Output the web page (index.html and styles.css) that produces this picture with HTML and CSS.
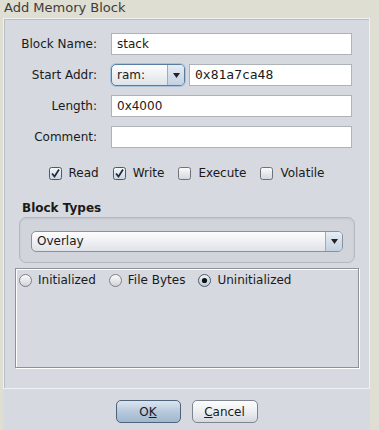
FILE: index.html
```html
<!DOCTYPE html>
<html lang="en">
<head>
    <meta charset="UTF-8">
    <title>Add Memory Block</title>
    <link rel="stylesheet" href="styles.css">
</head>
<body>
    <div class="title">Add Memory Block</div>

    <div class="window">
        <div class="main">
            <div class="form-grid">
                <label class="field-label">Block Name:</label>
                <div class="text-field">stack</div>

                <label class="field-label">Start Addr:</label>
                <div class="addr-row">
                    <div class="combo combo-focus space-combo">
                        <span class="combo-text">ram:</span>
                        <span class="combo-arrow">
                            <svg width="7" height="5" viewBox="0 0 7 5"><path d="M0 0 H7 L3.5 5 Z" fill="#222"/></svg>
                        </span>
                    </div>
                    <div class="text-field mono addr-field">0x81a7ca48</div>
                </div>

                <label class="field-label">Length:</label>
                <div class="text-field">0x4000</div>

                <label class="field-label">Comment:</label>
                <div class="text-field"></div>
            </div>

            <div class="check-row">
                <span class="check-item">
                    <svg class="check-box" width="13" height="13" viewBox="0 0 13 13">
                        <rect x="0.5" y="0.5" width="12" height="12" rx="2" fill="url(#cbOn)" stroke="#535861"/>
                        <path d="M3 6.5 L5.5 9.5 L10 2.5" fill="none" stroke="#1e2b3c" stroke-width="1.7"/>
                    </svg>
                    Read
                </span>
                <span class="check-item">
                    <svg class="check-box" width="13" height="13" viewBox="0 0 13 13">
                        <rect x="0.5" y="0.5" width="12" height="12" rx="2" fill="url(#cbOn)" stroke="#535861"/>
                        <path d="M3 6.5 L5.5 9.5 L10 2.5" fill="none" stroke="#1e2b3c" stroke-width="1.7"/>
                    </svg>
                    Write
                </span>
                <span class="check-item">
                    <svg class="check-box" width="13" height="13" viewBox="0 0 13 13">
                        <rect x="0.5" y="0.5" width="12" height="12" rx="2" fill="url(#cbOff)" stroke="#6d7179"/>
                    </svg>
                    Execute
                </span>
                <span class="check-item">
                    <svg class="check-box" width="13" height="13" viewBox="0 0 13 13">
                        <rect x="0.5" y="0.5" width="12" height="12" rx="2" fill="url(#cbOff)" stroke="#6d7179"/>
                    </svg>
                    Volatile
                </span>
            </div>

            <div class="section-title">Block Types</div>
            <div class="type-group">
                <div class="combo type-combo">
                    <span class="combo-text">Overlay</span>
                    <span class="combo-arrow">
                        <svg width="7" height="5" viewBox="0 0 7 5"><path d="M0 0 H7 L3.5 5 Z" fill="#222"/></svg>
                    </span>
                </div>
            </div>

            <div class="radio-panel">
                <span class="radio-item">
                    <svg width="13" height="13" viewBox="0 0 13 13">
                        <circle cx="6.5" cy="6.5" r="6" fill="url(#rbOff)" stroke="#7a7e86"/>
                    </svg>
                    Initialized
                </span>
                <span class="radio-item">
                    <svg width="13" height="13" viewBox="0 0 13 13">
                        <circle cx="6.5" cy="6.5" r="6" fill="url(#rbOff)" stroke="#7a7e86"/>
                    </svg>
                    File Bytes
                </span>
                <span class="radio-item">
                    <svg width="13" height="13" viewBox="0 0 13 13">
                        <circle cx="6.5" cy="6.5" r="6" fill="url(#rbOn)" stroke="#4f5663"/>
                        <circle cx="6.5" cy="6.5" r="2.6" fill="#111"/>
                    </svg>
                    Uninitialized
                </span>
            </div>
        </div>

        <div class="button-row">
            <button class="btn btn-default">O<u>K</u></button>
            <button class="btn"><u>C</u>ancel</button>
        </div>
    </div>

    <!-- shared gradients for the check and radio glyphs -->
    <svg class="defs" width="0" height="0">
        <defs>
            <linearGradient id="cbOff" x1="0" y1="0" x2="0" y2="1">
                <stop offset="0" stop-color="#fbfbfc"/>
                <stop offset="1" stop-color="#d3d6dc"/>
            </linearGradient>
            <linearGradient id="cbOn" x1="0" y1="0" x2="0" y2="1">
                <stop offset="0" stop-color="#f4f7fb"/>
                <stop offset="1" stop-color="#c9d4e2"/>
            </linearGradient>
            <linearGradient id="rbOff" x1="0" y1="0" x2="0" y2="1">
                <stop offset="0" stop-color="#fcfcfd"/>
                <stop offset="1" stop-color="#cfd2d8"/>
            </linearGradient>
            <linearGradient id="rbOn" x1="0" y1="0" x2="0" y2="1">
                <stop offset="0" stop-color="#eef3f9"/>
                <stop offset="1" stop-color="#b9c8da"/>
            </linearGradient>
        </defs>
    </svg>
</body>
</html>
```

FILE: styles.css
```css
/* Swing / Nimbus style dialog */
body {
    margin: 0;
    background-color: #dfded3;
    font-family: "DejaVu Sans", sans-serif;
    font-size: 12px;
    color: #1a1a1a;
    overflow: hidden;
}

.title {
    height: 18px;
    padding-left: 4px;
    font-size: 13px;
    line-height: 16px;
    color: #3c3c3c;
}

.window {
    margin-left: 3px;
    width: 367px;
    height: 412px;
    background-color: #d6d9df;
}

.main {
    height: 369px;
    border: 1px solid #eef0f2;
    box-shadow: inset 1px 1px 0 #b9bcc2;
    box-sizing: content-box;
}

.form-grid {
    display: grid;
    grid-template-columns: 93px 241px;
    grid-auto-rows: 22px;
    column-gap: 14px;
    row-gap: 9px;
    padding-top: 14px;
}

.field-label {
    text-align: right;
    line-height: 22px;
    color: #1a1a1a;
}

.text-field {
    background-color: #ffffff;
    border: 1px solid #aeb2b9;
    box-sizing: border-box;
    height: 22px;
    padding: 0 5px;
    line-height: 20px;
    white-space: nowrap;
}

.mono {
    font-family: "DejaVu Sans Mono", monospace;
    font-size: 13px;
}

.addr-row {
    display: flex;
    gap: 4px;
}

.addr-field {
    flex: 1;
}

.combo {
    display: flex;
    box-sizing: border-box;
    border: 1px solid #8c9098;
    border-radius: 5px;
    background: linear-gradient(#fdfdfe, #eef0f3 50%, #dfe2e7);
    overflow: hidden;
}

.combo-focus {
    border-color: #5a7ca3;
    box-shadow: 0 0 0 1px #a9c3de;
}

.space-combo {
    width: 74px;
    height: 22px;
}

.combo-text {
    flex: 1;
    padding-left: 5px;
    line-height: 20px;
}

.combo-arrow {
    width: 16px;
    display: flex;
    align-items: center;
    justify-content: center;
    border-left: 1px solid #a3aab4;
    background: linear-gradient(#e6edf5, #c3d1e1);
}

.check-row {
    display: flex;
    justify-content: center;
    gap: 14px;
    height: 16px;
    margin-top: 17px;
}

.check-item,
.radio-item {
    display: flex;
    align-items: center;
    gap: 7px;
}

.section-title {
    margin-top: 20px;
    margin-left: 18px;
    font-weight: bold;
    line-height: 15px;
}

.type-group {
    margin: 1px 14px 0 15px;
    height: 46px;
    box-sizing: border-box;
    border: 1px solid #b4b8bf;
    border-radius: 7px;
    background-color: #d1d4da;
    box-shadow: inset 0 1px 2px rgba(0, 0, 0, 0.08);
    padding: 13px 11px 0 11px;
}

.type-combo {
    height: 21px;
}

.type-combo .combo-text {
    line-height: 19px;
}

.radio-panel {
    display: flex;
    gap: 13px;
    margin: 5px 0 0 11px;
    width: 344px;
    height: 100px;
    box-sizing: border-box;
    border: 1px solid #8f9298;
    box-shadow: inset 1px 1px 0 #ffffff, 1px 1px 0 #ffffff;
    padding: 4px 0 0 3px;
    align-items: flex-start;
}

.radio-item {
    height: 14px;
    gap: 6px;
}

.button-row {
    display: flex;
    justify-content: center;
    gap: 11px;
    margin-top: 11px;
}

.btn {
    width: 66px;
    height: 23px;
    font-family: "DejaVu Sans", sans-serif;
    font-size: 12px;
    color: #1a1a1a;
    border: 1px solid #7f858e;
    border-radius: 5px;
    background: linear-gradient(#fdfdfe, #eceef1 50%, #d5d9df);
    padding: 0;
}

.btn-default {
    width: 65px;
    border-color: #4e627c;
    background: linear-gradient(#dbe5f0, #b7c9dc 50%, #a1b7ce);
}

.defs {
    position: absolute;
}
```
